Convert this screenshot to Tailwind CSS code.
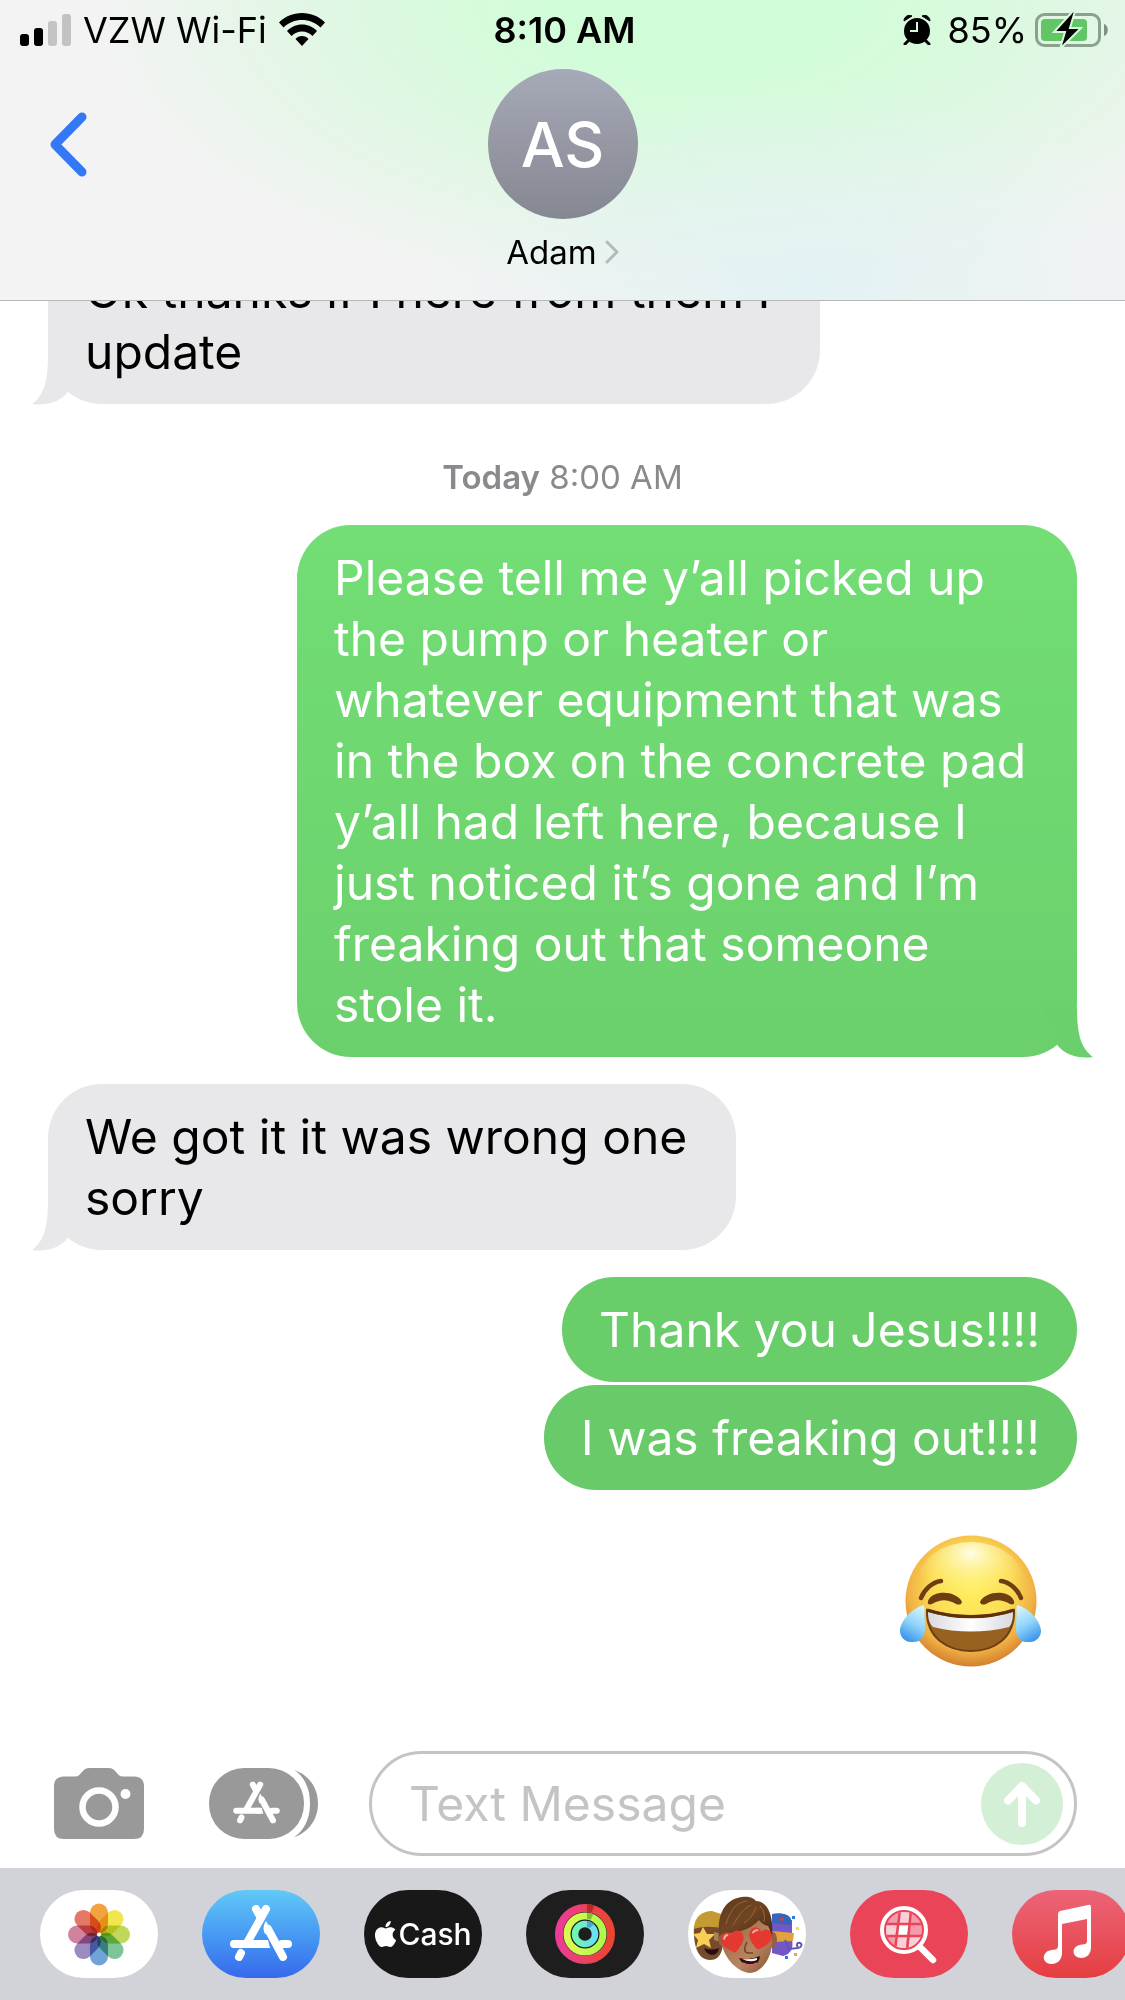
<!DOCTYPE html>
<html lang="en">
<head>
<meta charset="utf-8">
<meta name="viewport" content="width=device-width, initial-scale=1">
<title>Messages – Adam</title>
<script src="https://cdn.jsdelivr.net/npm/@tailwindcss/browser@4"></script>
</head>
<body class="bg-white">
<svg class="hidden" aria-hidden="true">
  <symbol id="store" viewBox="0 0 62 56">
    <g fill="none" stroke="currentColor" stroke-width="8" stroke-linecap="round">
      <path d="M36 4 17 38M26 4l5 9M4 39h30M52 39h6M11 48l-2 4M38 24l15 28"/>
    </g>
    <path fill="currentColor" d="M36 16c-3 5-3 9-1 13l7-2zM30 35h8l2 8H30z"/>
  </symbol>
  <symbol id="tail" viewBox="0 0 52 51">
    <path fill="currentColor" d="M16 0C16 28 12 41 0 50 15 52 27 48 35 39L50 0Z"/>
  </symbol>
</svg>

<div class="flex min-h-screen flex-col overflow-hidden font-['Inter',sans-serif] text-black">
  <header class="relative z-10 border-b border-[#b4b8b6] bg-[#f3f3f3] bg-[radial-gradient(ellipse_34%_65%_at_72%_95%,#e3f2f4_0%,#e3f2f400_100%),radial-gradient(ellipse_54%_100%_at_62%_0%,#d0fdd8_22%,#ddf8e1_55%,#f0f3f000_100%)]">
    <div class="grid h-[59px] grid-cols-[1fr_auto_1fr] items-center pr-4 pl-5 text-[36px] leading-[44px]">
      <div class="flex items-center gap-3">
        <svg class="h-8 w-[51px]" viewBox="0 0 51 32" aria-label="Signal"><rect y="20" width="9" height="12" rx="3"/><rect x="14" y="14" width="9" height="18" rx="3"/><g fill="#c3c3c5"><rect x="28" y="7" width="9" height="25" rx="3"/><rect x="42" width="9" height="32" rx="3"/></g></svg>
        <span>VZW Wi-Fi</span>
        <svg class="h-[33px] w-[46px]" viewBox="0 0 46 33" aria-label="Wi-Fi"><path d="M23 0C14 0 6 3.500 0 9.500L4.500 14.500C9.500 9.500 16 7 23 7S36.500 9.500 41.500 14.500L46 9.500C40 3.500 32 0 23 0ZM23 11.500C17 11.500 12 14 8 18L12.500 23C15.500 20 19 18.500 23 18.500S30.500 20 33.500 23L38 18C34 14 29 11.500 23 11.500ZM23 23C20.500 23 18 24 16.500 26L23 33 29.500 26C28 24 25.500 23 23 23Z"/></svg>
      </div>
      <time class="font-semibold">8:10 AM</time>
      <div class="flex items-center justify-end">
        <svg class="mr-4 h-[30px] w-7" viewBox="0 0 28 30" aria-label="Alarm"><circle cx="14" cy="16" r="13"/><path d="M1 6C1 2 5-1 9 1ZM27 6C27 2 23-1 19 1Z" stroke="#000" stroke-width="1"/><path d="M5 26l-3 3M23 26l3 3" stroke="#000" stroke-width="3" stroke-linecap="round"/><path d="M14 7v9H7" fill="none" stroke="#d2fcda" stroke-width="2"/></svg>
        <span class="mr-2">85%</span>
        <svg class="h-[34px] w-[74px] overflow-visible" viewBox="0 0 74 34" aria-label="Battery"><rect x="1.500" y="1.500" width="63" height="31" rx="8" fill="none" stroke="#8aa28d" stroke-width="3"/><rect x="6" y="6" width="46" height="22" rx="4" fill="#62c667"/><path d="M69 11c5 1 5 11 0 12Z" fill="#7f8f81"/><path d="M38-2 19 19h11l-5 17L46 15H35l5-17Z" stroke="#d6fadb" stroke-width="2"/></svg>
      </div>
    </div>
    <div class="grid grid-cols-[1fr_auto_1fr] items-start px-[46px] pt-[10px] pb-[24px]">
      <button type="button" aria-label="Back" class="mt-[42px] w-12"><svg class="h-[66px] w-12" viewBox="0 0 48 66"><path d="M36 6 9 33.500 36 61" fill="none" stroke="#3478f6" stroke-width="9" stroke-linecap="round" stroke-linejoin="round"/></svg></button>
      <div class="flex flex-col items-center">
        <div class="flex size-[150px] items-center justify-center rounded-full bg-linear-to-b from-[#a6a9b7] to-[#858891] text-[62px] font-medium text-white">AS</div>
        <a href="#adam" class="mt-[15px] flex items-center gap-2 text-[33px] leading-[36px]">Adam
          <svg class="h-[24px] w-[14px]" viewBox="0 0 14 24"><path d="M2 2 12 12 2 22" fill="none" stroke="#b5babb" stroke-width="3" stroke-linecap="round" stroke-linejoin="round"/></svg></a>
      </div>
    </div>
    <div class="h-1.5"></div>
  </header>

  <main class="-mt-[63px] flex flex-1 flex-col px-12 text-[48px] leading-[61px]">
    <div class="relative w-[772px] max-w-[75%] rounded-[54px] bg-[#e8e8ea] pt-[22px] pr-5 pb-[22px] pl-[37px]">
      <svg class="absolute -bottom-px -left-4 h-[51px] w-[52px] text-[#e8e8ea]"><use href="#tail"/></svg>
      <p class="relative">Ok thanks if I here from them I update</p>
    </div>
    <p class="mt-[53px] mb-7 text-center text-[33px] leading-[40px] text-[#8a8a8e]"><strong class="font-semibold">Today</strong> 8:00 AM</p>
    <div class="relative w-[780px] max-w-[76%] self-end rounded-[54px] bg-linear-to-b from-[#72de74] to-[#6bd06c] pt-[22px] pr-[37px] pb-[22px] pl-[37px] text-white">
      <svg class="absolute -right-4 -bottom-px h-[51px] w-[52px] -scale-x-100 text-[#6bd06c]"><use href="#tail"/></svg>
      <p class="relative">Please tell me y’all picked up the pump or heater or whatever equipment that was in the box on the concrete pad y’all had left here, because I just noticed it’s gone and I’m freaking out that someone stole it.</p>
    </div>
    <div class="relative mt-[27px] w-[688px] max-w-[75%] rounded-[54px] bg-[#e8e8ea] pt-[22px] pr-5 pb-[22px] pl-[37px]">
      <svg class="absolute -bottom-px -left-4 h-[51px] w-[52px] text-[#e8e8ea]"><use href="#tail"/></svg>
      <p class="relative">We got it it was wrong one sorry</p>
    </div>
    <p class="mt-[27px] self-end rounded-[52px] bg-[#69ce6a] px-[37px] py-[22px] text-white">Thank you Jesus!!!!</p>
    <p class="mt-[3px] self-end rounded-[52px] bg-[#68ca69] px-[37px] py-[22px] text-white">I was freaking out!!!!</p>
    <svg class="mt-11 mr-[34px] h-[134px] w-[144px] self-end" viewBox="0 0 144 134" role="img" aria-label="Face with tears of joy">
      <defs>
        <radialGradient id="face" cx=".5" cy=".4" r=".6"><stop offset="0" stop-color="#ffef5e"/><stop offset=".5" stop-color="#fbdd55"/><stop offset=".8" stop-color="#f1b144"/><stop offset="1" stop-color="#d3802f"/></radialGradient>
        <radialGradient id="shine" cx=".5" cy=".15" r=".6"><stop offset="0" stop-color="#fffde5"/><stop offset="1" stop-color="#fff06a" stop-opacity="0"/></radialGradient>
        <linearGradient id="tear" x1=".7" y1="0" x2=".3" y2="1"><stop offset="0" stop-color="#d5f3fd"/><stop offset=".5" stop-color="#8ed4fa"/><stop offset="1" stop-color="#3691ea"/></linearGradient>
        <linearGradient id="teeth" x1="0" x2="1"><stop offset="0" stop-color="#d9d9df"/><stop offset=".5" stop-color="#fff"/><stop offset="1" stop-color="#d9d9df"/></linearGradient>
      </defs>
      <circle cx="72" cy="67" r="65.500" fill="url(#face)"/>
      <ellipse cx="72" cy="46" rx="52" ry="38" fill="url(#shine)"/>
      <g fill="none" stroke="#6e3e12" stroke-linecap="round" stroke-width="4.500"><path d="M22 64C25 56 33 48 42 47M122 64C119 56 111 48 102 47"/></g>
      <path d="M29 67C34 55 58 57 63 68 62 71 60 71 57 70 48 65 42 65 33 70 30 71 28 70 29 67ZM81 68C86 57 110 55 115 67 116 70 114 71 111 70 102 65 96 65 87 70 84 71 82 71 81 68Z" fill="#6e3e12"/>
      <path d="M28 76C56 84 88 84 115 76 116 104 95 117 72 117S27 104 28 76Z" fill="#97621f" stroke="#6e3e12" stroke-width="2"/>
      <path d="M29 78C56 86 88 86 114 78 114 85 113 90 110 93 86 99 58 99 34 93 31 90 29 86 29 78Z" fill="url(#teeth)"/>
      <path d="M28 76C56 85 88 85 115 76" fill="none" stroke="#5d310c" stroke-width="3"/>
      <path d="M25 71C13 74 1 87 1 97 1 103 6 108 12 108 22 109 27 103 26 90 25 82 26 76 25 71Z" fill="url(#tear)"/>
      <path d="M25 71C13 74 1 87 1 97 1 103 6 108 12 108 22 109 27 103 26 90 25 82 26 76 25 71Z" fill="url(#tear)" transform="matrix(-1 0 0 1 143 0)"/>
    </svg>
  </main>

  <form class="flex items-center px-12 pb-3" onsubmit="return false">
    <button type="button" aria-label="Camera" class="ml-1.5 shrink-0"><svg class="h-[71px] w-[90px]" viewBox="0 0 90 71"><path fill="#999" d="M10 8.500h11c7 0 6-8.500 15-8.500h18c9 0 8 8.500 15 8.500h11q10 0 10 10V61q0 10-10 10H10Q0 71 0 61V18.500q0-10 10-10Z"/><circle cx="45" cy="39" r="16.500" fill="none" stroke="#fff" stroke-width="6.500"/><circle cx="71.500" cy="26" r="5" fill="#fff"/></svg></button>
    <button type="button" aria-label="Apps" class="ml-[65px] shrink-0"><svg class="h-[71px] w-[109px] text-white" viewBox="0 0 109 71"><rect width="95" height="71" rx="35" fill="#999"/><path fill="#999" d="M85 2C98 6 109 18 109 35.500S98 65 85 69C95 63 101 51 101 35.500S95 8 85 2Z"/><use href="#store" x="24" y="13.500" width="47" height="42"/></svg></button>
    <div class="ml-[51px] flex h-[105px] min-w-0 flex-1 items-center rounded-full border-[3px] border-[#c4c4c6] pr-[11px] pl-[37px]">
      <input type="text" aria-label="Text Message" placeholder="Text Message" class="h-[72px] min-w-0 flex-1 bg-transparent text-[48px] outline-none placeholder:text-[#c4c4c6]">
      <button type="submit" aria-label="Send" class="size-[82px] shrink-0 rounded-full bg-[#d3f0d7]"><svg class="size-[82px]" viewBox="0 0 82 82"><path d="M41 60V24M27 37.500 41 23l14 14.500" fill="none" stroke="#fff" stroke-width="8" stroke-linecap="round" stroke-linejoin="round"/></svg></button>
    </div>
  </form>

  <nav aria-label="iMessage apps" class="flex gap-11 overflow-hidden bg-[#d2d3d9] py-[22px] pl-10">
    <button type="button" aria-label="Photos" class="h-[88px] w-[118px] shrink-0 rounded-[44px] bg-white"><svg viewBox="0 0 118 88"><g transform="translate(59 44.500)"><g><rect class="mix-blend-multiply" x="-9" y="-31" width="18" height="30" rx="9" fill="#f1a341"/><rect class="mix-blend-multiply" x="-9" y="-31" width="18" height="30" rx="9" fill="#f3e54e" transform="rotate(45)"/><rect class="mix-blend-multiply" x="-9" y="-31" width="18" height="30" rx="9" fill="#bfd85b" transform="rotate(90)"/><rect class="mix-blend-multiply" x="-9" y="-31" width="18" height="30" rx="9" fill="#7dc498" transform="rotate(135)"/><rect class="mix-blend-multiply" x="-9" y="-31" width="18" height="30" rx="9" fill="#72a3d6" transform="rotate(180)"/><rect class="mix-blend-multiply" x="-9" y="-31" width="18" height="30" rx="9" fill="#9d8ac0" transform="rotate(225)"/><rect class="mix-blend-multiply" x="-9" y="-31" width="18" height="30" rx="9" fill="#d0829f" transform="rotate(270)"/><rect class="mix-blend-multiply" x="-9" y="-31" width="18" height="30" rx="9" fill="#e47766" transform="rotate(315)"/></g><circle r="2" fill="#fff"/></g></svg></button>
    <button type="button" aria-label="App Store" class="h-[88px] w-[118px] shrink-0 rounded-[44px] bg-linear-to-b from-[#62c9f7] to-[#3768ec] text-white"><svg viewBox="0 0 118 88"><use href="#store" x="28" y="15" width="62" height="56"/></svg></button>
    <button type="button" class="flex h-[88px] w-[118px] shrink-0 items-center justify-center gap-[2px] rounded-[44px] bg-[#181818] text-[30px] leading-9 font-medium text-white"><svg class="h-[26px] w-[22px] shrink-0" viewBox="2 0 19 24" aria-label="Apple"><path fill="#fff" d="M12.152 6.896c-.948 0-2.415-1.078-3.960-1.040-2.040.027-3.910 1.183-4.961 3.014-2.117 3.675-.546 9.103 1.519 12.090 1.013 1.454 2.208 3.090 3.792 3.039 1.520-.065 2.090-.987 3.935-.987 1.831 0 2.350.987 3.960.948 1.637-.026 2.676-1.480 3.676-2.948 1.156-1.688 1.636-3.325 1.662-3.415-.039-.013-3.182-1.221-3.220-4.857-.026-3.040 2.480-4.494 2.597-4.559-1.429-2.090-3.623-2.324-4.390-2.376-2-.156-3.675 1.090-4.610 1.090zM15.530 3.830c.843-1.012 1.400-2.427 1.245-3.830-1.207.052-2.662.805-3.532 1.818-.780.896-1.454 2.338-1.273 3.714 1.338.104 2.715-.688 3.559-1.701"/></svg>Cash</button>
    <button type="button" aria-label="Activity" class="h-[88px] w-[118px] shrink-0 rounded-[44px] bg-[#1e1e1e]"><svg viewBox="0 0 118 88"><defs><linearGradient id="move" x1="0" x2="1"><stop offset="0" stop-color="#ec3d96"/><stop offset="1" stop-color="#e9452f"/></linearGradient><linearGradient id="stand" x1="0" x2="1"><stop offset="0" stop-color="#72f5b0"/><stop offset="1" stop-color="#68dff3"/></linearGradient><linearGradient id="exercise" x1="0" x2="1"><stop offset="0" stop-color="#dcfb50"/><stop offset="1" stop-color="#aef94c"/></linearGradient></defs><g fill="none"><circle cx="59" cy="44" r="26" stroke="url(#move)" stroke-width="8"/><circle cx="59" cy="44" r="18" stroke="url(#exercise)" stroke-width="7"/><circle cx="59" cy="44" r="10" stroke="url(#stand)" stroke-width="6.500"/><path d="M61 18q3 0 6 1" stroke="#b32d20" stroke-width="7"/><path d="M61 26q3 0 5 1" stroke="#84bf35" stroke-width="6"/><path d="M61 34q3 0 5 2" stroke="#4aa7c5" stroke-width="6"/></g></svg></button>
    <button type="button" aria-label="Memoji" class="h-[88px] w-[118px] shrink-0 rounded-[44px] bg-white"><svg viewBox="0 0 118 88">
      <defs><linearGradient id="skin" x1="0" x2="1" y2="1"><stop offset="0" stop-color="#96623f"/><stop offset=".6" stop-color="#b98560"/><stop offset="1" stop-color="#875435"/></linearGradient><linearGradient id="hair" x1="0" x2="1" y2="1"><stop offset="0" stop-color="#5f3a1e"/><stop offset=".5" stop-color="#704522"/><stop offset="1" stop-color="#472812"/></linearGradient><symbol id="heart" viewBox="0 0 24 22"><path d="M12 22C4 16-1 11 1 5 3-1 10-1 12 4 14-1 21-1 23 5 25 11 20 16 12 22Z" fill="#e33931"/><path d="M4 6q1-3 4-3" stroke="#f9aaa4" stroke-width="2" stroke-linecap="round" fill="none"/></symbol></defs>
      <path d="M6 36C5 56 10 70 22 70S36 58 36 36Z" fill="#764b2d"/><path d="M6 39C6 27 14 21 24 21L36 25V39C26 36 15 36 6 39Z" fill="#c69a32"/><path d="M15 37l4 7 8 0-6 6 2 8-7-4-8 4 2-8-5-6 7-1Z" fill="#f8ce55"/><path d="M26 42l8 2-1 8-7-2Z" fill="#a98552"/><path d="M16 58q7 3 15 0-1 7-7 7-6-1-8-7Z" fill="#260f0a"/>
      <path d="M84 30h20v20c2 8-2 15-9 16l-11-3Z" fill="#7357c5"/><path d="M84 33V24c8-2 17 0 19 5v6Z" fill="#3865b8"/><circle cx="94" cy="29" r="2" fill="#da3949"/><path d="M84 41l22 2-1 8-20 1Z" fill="#dfa23d"/><path d="M97 50l4 9 9-1c3 0 5-4 2-5s-4 2-2 4" fill="none" stroke="#6354b8" stroke-width="2"/><path d="M104 26h3v3h-3zM97 66h3v3h-3z" fill="#2e78e5"/><path d="M108 37h3v3h-3z" fill="#f5dc54"/><path d="M106 63h3v3h-3z" fill="#eba34d"/>
      <ellipse cx="34" cy="48" rx="4" ry="8" fill="#936044"/><ellipse cx="85" cy="50" rx="4" ry="8" fill="#936044"/>
      <path d="M34 35C34 24 84 24 84 35V54C83 69 73 83 62 83S36 69 34 54Z" fill="url(#skin)"/>
      <path d="M31 46C29 24 37 9 54 7 63 6 66 9 68 11 79 11 86 25 84 47 82 42 82 39 80 36 76 35 73 33 71 30 65 37 55 42 42 43 37 43 34 44 31 46Z" fill="url(#hair)"/>
      <path d="M38 34C43 18 50 12 59 11M45 35C52 24 55 19 63 15M56 33Q65 27 68 17M76 32Q78 23 72 16" fill="none" stroke="#9a683c" stroke-width="1"/>
      <path d="M59 52q-5 10 1 11h5" fill="none" stroke="#704329" stroke-width="1.500"/>
      <use href="#heart" x="33" y="41" width="24" height="22" transform="rotate(-12 45 52)"/><use href="#heart" x="60" y="38" width="24" height="22" transform="rotate(12 72 48)"/>
      <path d="M51 68Q61 71 72 66 71 76 62 75 54 75 51 68Z" fill="#28100c"/><path d="M54 69q7 1 15-1v2q-7 3-15-1Z" fill="#fff"/><path d="M55 73q7 4 14 0" stroke="#d2636b" stroke-width="2" fill="none"/>
    </svg></button>
    <button type="button" aria-label="Images search" class="h-[88px] w-[118px] shrink-0 rounded-[44px] bg-[#ea4459]"><svg viewBox="0 0 118 88"><clipPath id="lens"><circle cx="54" cy="40" r="18"/></clipPath><g clip-path="url(#lens)"><path fill="#f49cac" d="M34 20h40v40H34z"/><path fill="#fad0d8" d="M49 20h11l-1 14H48zM34 35h13l-2 11H34zM46 47h11l-1 15H44zM60 47h16v15H58z"/><path fill="#fff" d="M49 35h10l-2 11H47z"/><path d="M34 34h40M34 46h40M50 20l-5 40M61 20l-4 40" stroke="#ea4459" stroke-width="2.500"/></g><circle cx="54" cy="40" r="22" fill="none" stroke="#fff" stroke-width="4"/><path d="M70 57l13 13" stroke="#fff" stroke-width="6.500" stroke-linecap="round"/></svg></button>
    <button type="button" aria-label="Music" class="h-[88px] w-[118px] shrink-0 rounded-[44px] bg-linear-to-b from-[#ec6478] to-[#e53c40]"><svg viewBox="0 0 118 88"><path fill="#fff" d="M48 21 76 15q3-1 3 2V57c0 7-4 11-10 11-8 0-10-9-4-12 5-3 10 0 10-5V29L50 34V63c0 7-5 11-10 11-9 0-11-9-4-13 5-2 10 0 10-5V24q0-2 2-3Z"/></svg></button>
  </nav>
</div>
</body>
</html>
